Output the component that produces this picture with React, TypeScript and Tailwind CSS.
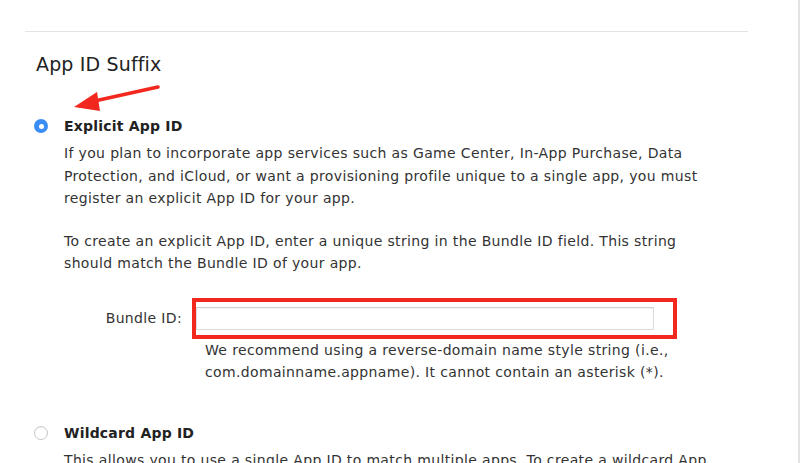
import React from "react";

const font = { fontFamily: '"DejaVu Sans", "Noto Sans", sans-serif' };

function Radio({ checked }: { checked?: boolean }) {
  return checked ? (
    <span className="w-[14px] h-[14px] rounded-full bg-[#3a8ef6] flex items-center justify-center shrink-0">
      <span className="w-[5px] h-[5px] rounded-full bg-white" />
    </span>
  ) : (
    <span className="w-[14px] h-[14px] rounded-full border border-[#c8c8c8] bg-white shrink-0 shadow-[inset_0_1px_1px_rgba(0,0,0,0.06)]" />
  );
}

export default function App() {
  return (
    <div className="w-[800px] h-[463px] overflow-hidden bg-white flex text-[#333]" style={font}>
      <div className="flex-1 relative">
        {/* top rule */}
        <div className="mt-[31px] ml-[25px] mr-[50px] border-t border-[#e4e4e4]" />

        <h2 className="ml-[36px] mt-[19px] text-[19px] leading-[26px] tracking-[0.15px] text-[#222]">App ID Suffix</h2>

        {/* annotation arrow */}
        <svg className="absolute left-[70px] top-[82px]" width="95" height="32" viewBox="0 0 95 32">
          <line x1="88" y1="5" x2="20" y2="20" stroke="#f2281f" strokeWidth="3.5" strokeLinecap="round" />
          <polygon points="4,25 27,10 30,29" fill="#f2281f" />
        </svg>

        <div className="mt-[39px] ml-[34px] flex items-center gap-[16px]">
          <Radio checked />
          <span className="text-[14px] font-bold leading-[20px] tracking-[0.2px] text-[#222]">Explicit App ID</span>
        </div>

        <div className="ml-[64px] mt-[6px] text-[14px] leading-[22.5px] tracking-[0.35px]">
          <p>
            If you plan to incorporate app services such as Game Center, In-App Purchase, Data<br />
            Protection, and iCloud, or want a provisioning profile unique to a single app, you must<br />
            register an explicit App ID for your app.
          </p>
          <p className="mt-[20px]">
            To create an explicit App ID, enter a unique string in the Bundle ID field. This string<br />
            should match the Bundle ID of your app.
          </p>
        </div>

        <div className="mt-[23px] flex items-center">
          <span className="w-[182px] text-right text-[14px] tracking-[0.35px]">Bundle ID:</span>
          <div className="ml-[10px] w-[485px] h-[41px] border-[4.5px] border-[#f2281f] flex items-center">
            <input
              className="w-[458px] h-[23px] border border-[#dcdcdc] border-t-[#cfcfcf] bg-white outline-none shadow-[inset_0_1px_1px_rgba(0,0,0,0.05)]"
              style={font}
            />
          </div>
        </div>

        <p className="ml-[205px] text-[14px] leading-[22.5px] tracking-[0.35px]">
          We recommend using a reverse-domain name style string (i.e.,<br />
          com.domainname.appname). It cannot contain an asterisk (*).
        </p>

        <div className="mt-[39px] ml-[34px] flex items-center gap-[16px]">
          <Radio />
          <span className="text-[14px] font-bold leading-[20px] tracking-[0.2px] text-[#222]">Wildcard App ID</span>
        </div>
        <p className="ml-[64px] mt-[6px] text-[14px] leading-[22.5px] tracking-[0.35px] whitespace-nowrap">
          This allows you to use a single App ID to match multiple apps. To create a wildcard App
        </p>
      </div>
      <div className="w-[2px] bg-[#e2e2e2]" />
    </div>
  );
}
